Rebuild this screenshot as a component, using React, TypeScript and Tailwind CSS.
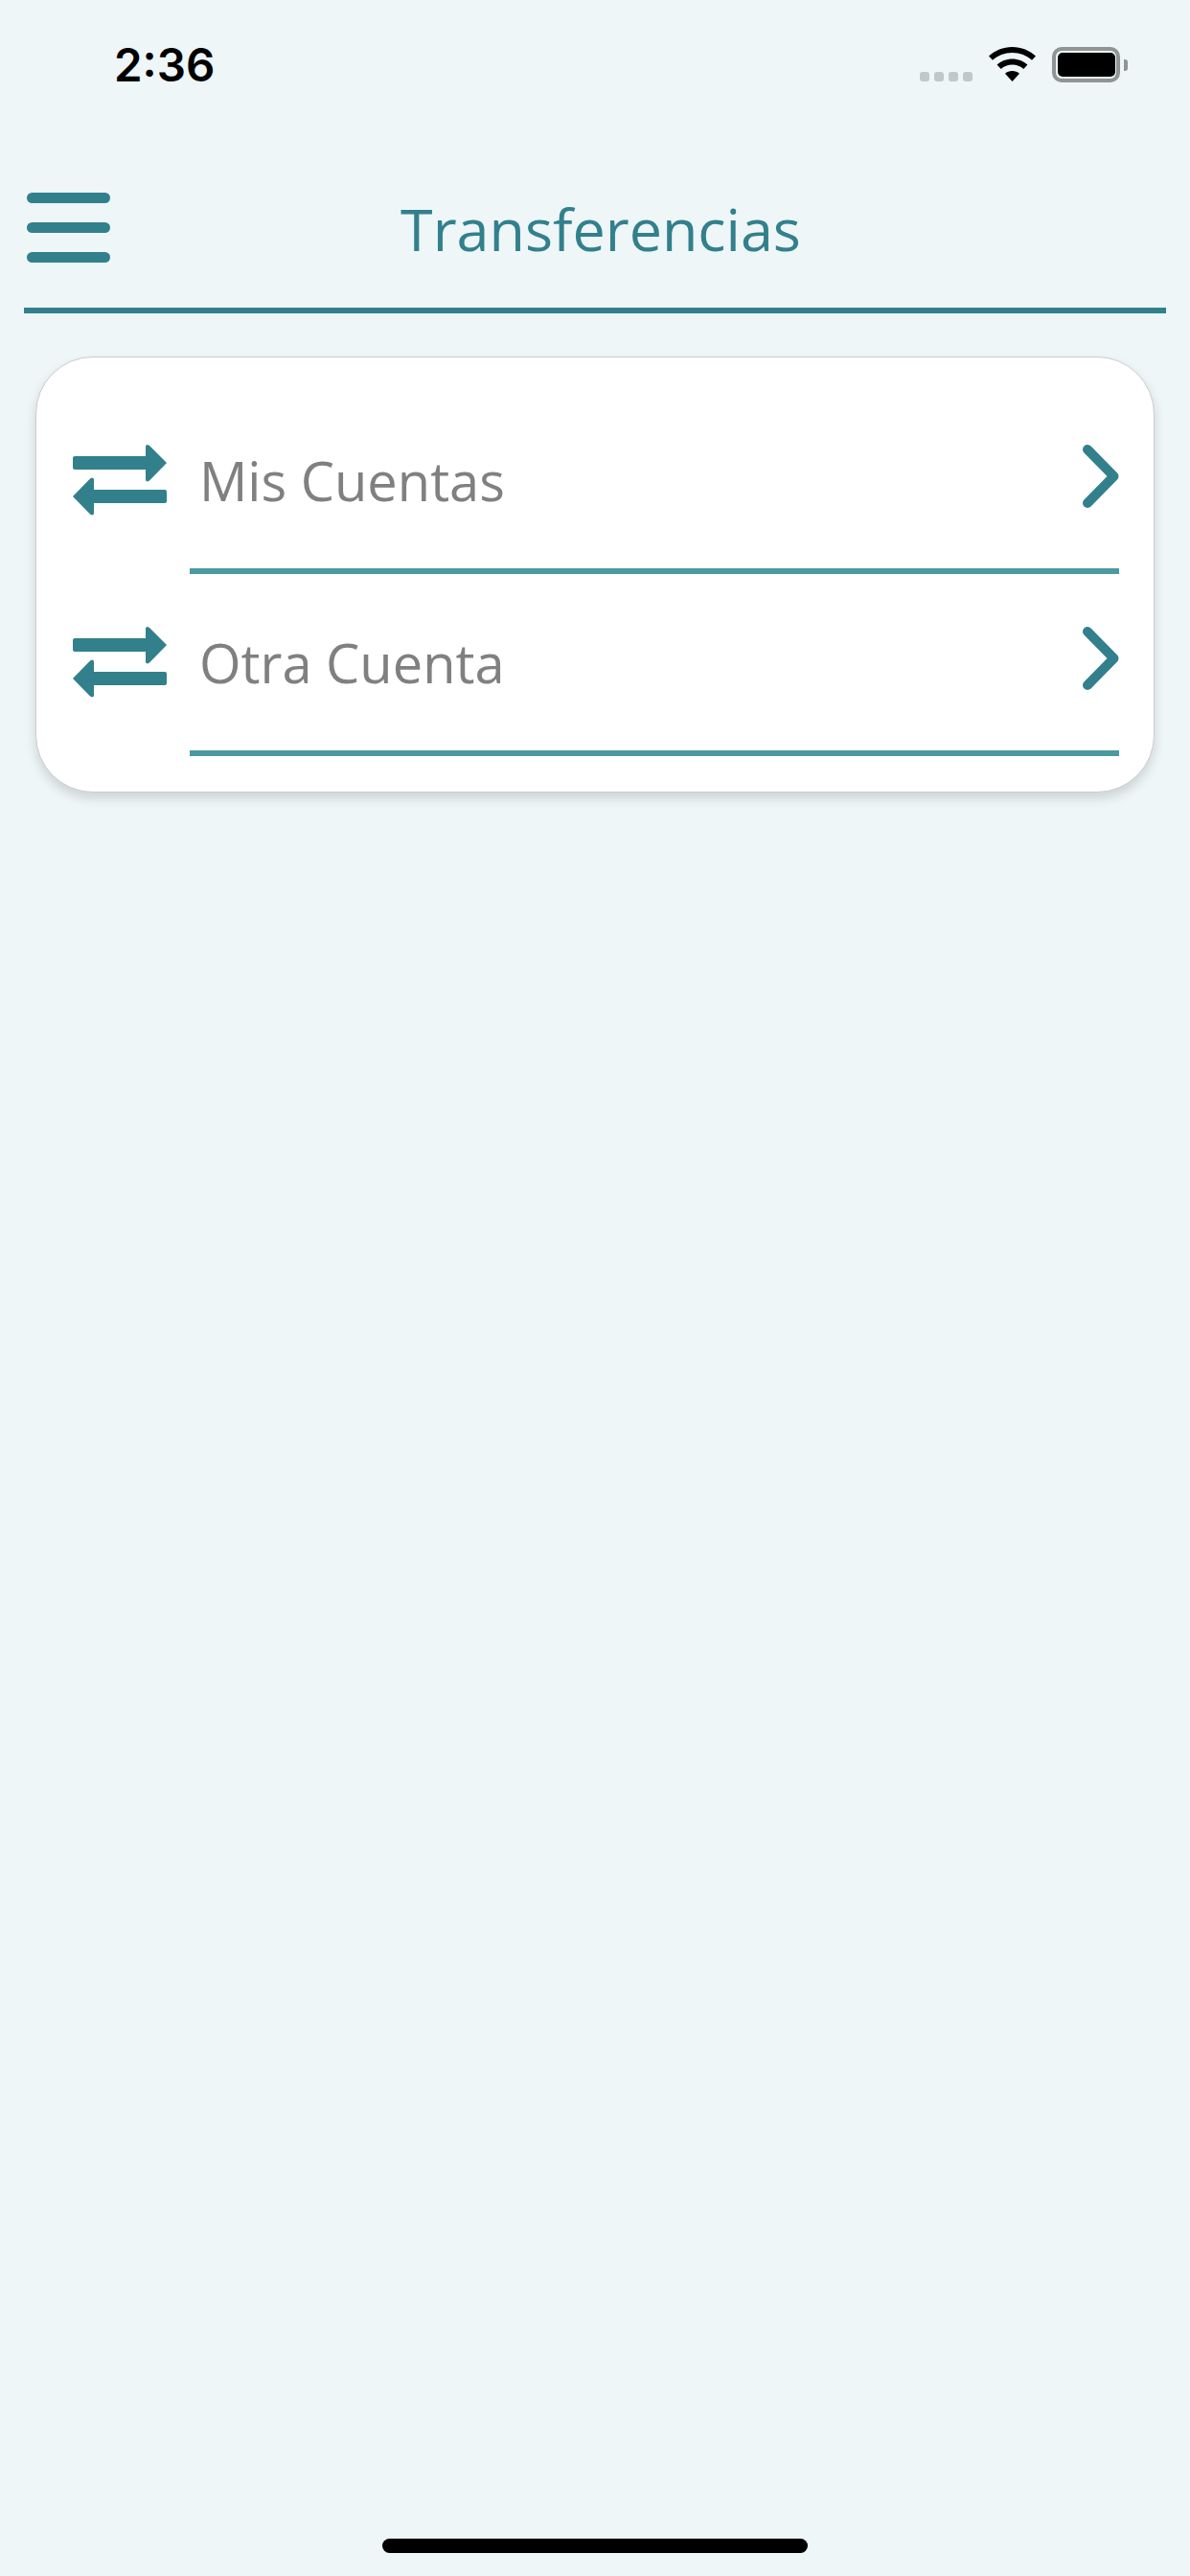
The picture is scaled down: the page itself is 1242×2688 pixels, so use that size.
const teal = "#32808c";

function Arrows() {
  return (
    <svg width="98" height="74" viewBox="0 0 98 74" className="block shrink-0" fill={teal}>
      <path d="M2 12H76V2Q76 0 78 0L80 1L98 19L80 37.5L78 38.5Q76 38.5 76 36.5V26H2Q0 26 0 24V14Q0 12 2 12Z" />
      <path d="M96 47H22V36.5Q22 34.5 20 34.5L18 35.5L0 54L18 72.5L20 73.5Q22 73.5 22 71.5V61H96Q98 61 98 59V49Q98 47 96 47Z" />
    </svg>
  );
}

function Chevron() {
  return (
    <svg width="38" height="66" viewBox="0 0 38 66" className="block shrink-0" fill="none" stroke={teal} strokeWidth="10" strokeLinecap="round" strokeLinejoin="round">
      <path d="M5 5L32.5 33L5 61" />
    </svg>
  );
}

function Row({ label }: { label: string }) {
  return (
    <div>
      <div className="flex h-[184px] items-start">
        <div className="mt-[55px] ml-[38px]"><Arrows /></div>
        <span className="ml-[34px] mt-[55px] flex-1 text-[56px] leading-[74px] text-[#808080]">{label}</span>
        <div className="mt-[55px] mr-[36px]"><Chevron /></div>
      </div>
      <div className="ml-[160px] mr-[36px] h-[6px] bg-[#4b99a3]" />
    </div>
  );
}

export default function App() {
  return (
    <div className="flex h-[2688px] w-[1242px] flex-col overflow-hidden bg-[#eef6f8] font-['Open_Sans',sans-serif]">
      <div className="flex h-[110px] items-start">
        <span className="ml-[119px] mt-[39px] font-['Inter',sans-serif] text-[47.5px] font-semibold leading-[58px] text-black">2:36</span>
        <div className="ml-auto mr-[65px] mt-[49px] flex items-start">
          <div className="mt-[26px] flex gap-[5px]">
            <div className="h-[10px] w-[10px] rounded-[3px] bg-[#c0c8c8]" />
            <div className="h-[10px] w-[10px] rounded-[3px] bg-[#c0c8c8]" />
            <div className="h-[10px] w-[10px] rounded-[3px] bg-[#c0c8c8]" />
            <div className="h-[10px] w-[10px] rounded-[3px] bg-[#c0c8c8]" />
          </div>
          <svg width="49" height="36" viewBox="0 0 49 36" className="ml-[17px] block" fill="#000">
            <path d="M24.5 0C15 0 6.5 3.6 0 9.5L4 13.8C9.4 8.9 16.6 6 24.5 6S39.6 8.9 45 13.8L49 9.5C42.5 3.6 34 0 24.5 0Z" />
            <path d="M24.5 12.5C18.4 12.5 12.8 14.8 8.6 18.6L12.7 23C15.8 20.2 20 18.5 24.5 18.5S33.2 20.2 36.3 23L40.4 18.6C36.2 14.8 30.6 12.5 24.5 12.5Z" />
            <path d="M24.5 25C21.6 25 19 26 17 27.8L24.5 36L32 27.8C30 26 27.4 25 24.5 25Z" />
          </svg>
          <div className="ml-[17px] flex items-center">
            <div className="flex h-[37px] w-[71px] items-center justify-center rounded-[10px] border-[4px] border-[#8e9594]">
              <div className="h-[25px] w-[60px] rounded-[5px] bg-black" />
            </div>
            <div className="ml-[4px] h-[12px] w-[4px] rounded-r-[3px] bg-[#8e9594]" />
          </div>
        </div>
      </div>

      <div className="relative mx-[25px] mt-[91px] flex h-[126px] items-center justify-center border-b-[6px] border-[#32808c]">
        <div className="absolute left-[3px] top-0 flex w-[87px] flex-col gap-[20px]">
          <div className="h-[11px] rounded-full bg-[#32808c]" />
          <div className="h-[11px] rounded-full bg-[#32808c]" />
          <div className="h-[11px] rounded-full bg-[#32808c]" />
        </div>
        <span className="mb-[44px] ml-[12px] text-[61px] leading-[80px] text-[#32808c]">Transferencias</span>
      </div>

      <div className="mx-[37px] mt-[45px] h-[455px] w-[1168px] rounded-[60px] border border-[#cccccc] bg-white pt-[36px] shadow-[0_6px_12px_rgba(0,0,0,0.14)]">
        <Row label="Mis Cuentas" />
        <Row label="Otra Cuenta" />
      </div>

      <div className="mx-auto mb-[24px] mt-auto h-[15px] w-[444px] rounded-full bg-black" />
    </div>
  );
}
